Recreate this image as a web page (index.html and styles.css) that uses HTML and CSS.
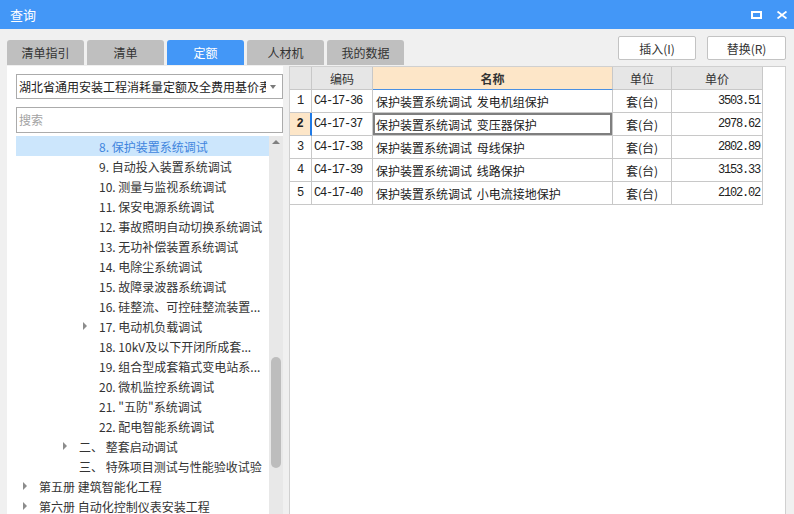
FILE: index.html
```html
<!DOCTYPE html>
<html lang="zh">
<head>
<meta charset="utf-8">
<title>查询</title>
<link rel="stylesheet" href="styles.css">
</head>
<body>
<div class="titlebar">
  <span class="title">查询</span>
  <div class="winbtns">
    <svg width="11" height="8" viewBox="0 0 11 8"><rect x="1" y="1" width="9" height="6" fill="none" stroke="#fff" stroke-width="2"/></svg>
    <svg width="10" height="8" viewBox="0 0 10 8"><path d="M0.5 0.5 L9.5 7.5 M9.5 0.5 L0.5 7.5" stroke="#fff" stroke-width="1.8" fill="none"/></svg>
  </div>
</div>
<div class="toolbar">
  <div class="tabs">
    <div class="tab">清单指引</div>
    <div class="tab">清单</div>
    <div class="tab active">定额</div>
    <div class="tab">人材机</div>
    <div class="tab">我的数据</div>
  </div>
  <div class="actions">
    <button class="btn btn-insert">插入(I)</button>
    <button class="btn">替换(R)</button>
  </div>
</div>
<div class="content">
  <div class="left">
    <div class="select"><span class="select-text">湖北省通用安装工程消耗量定额及全费用基价表</span><span class="select-arrow"></span></div>
    <div class="search">搜索</div>
    <div class="tree-wrap">
      <div class="tree">
        <div class="row i3 sel"><span class="caret"></span>8. 保护装置系统调试</div>
        <div class="row i3"><span class="caret"></span>9. 自动投入装置系统调试</div>
        <div class="row i3"><span class="caret"></span>10. 测量与监视系统调试</div>
        <div class="row i3"><span class="caret"></span>11. 保安电源系统调试</div>
        <div class="row i3"><span class="caret"></span>12. 事故照明自动切换系统调试</div>
        <div class="row i3"><span class="caret"></span>13. 无功补偿装置系统调试</div>
        <div class="row i3"><span class="caret"></span>14. 电除尘系统调试</div>
        <div class="row i3"><span class="caret"></span>15. 故障录波器系统调试</div>
        <div class="row i3"><span class="caret"></span>16. 硅整流、可控硅整流装置...</div>
        <div class="row i3"><span class="caret has"></span>17. 电动机负载调试</div>
        <div class="row i3"><span class="caret"></span>18. 10kV及以下开闭所成套...</div>
        <div class="row i3"><span class="caret"></span>19. 组合型成套箱式变电站系...</div>
        <div class="row i3"><span class="caret"></span>20. 微机监控系统调试</div>
        <div class="row i3"><span class="caret"></span>21. "五防"系统调试</div>
        <div class="row i3"><span class="caret"></span>22. 配电智能系统调试</div>
        <div class="row i2"><span class="caret has"></span>二、 整套启动调试</div>
        <div class="row i2"><span class="caret"></span>三、 特殊项目测试与性能验收试验</div>
        <div class="row i1"><span class="caret has"></span>第五册 建筑智能化工程</div>
        <div class="row i1"><span class="caret has"></span>第六册 自动化控制仪表安装工程</div>
      </div>
      <div class="scroll">
        <span class="scroll-up"></span>
        <span class="thumb"></span>
      </div>
    </div>
  </div>
  <div class="right">
    <div class="grow head">
      <div class="c n h"></div>
      <div class="c code h">编码</div>
      <div class="c name h hname">名称</div>
      <div class="c unit h">单位</div>
      <div class="c price h hprice">单价</div>
    </div>
    <div class="grow">
      <div class="c n mono">1</div>
      <div class="c code mono">C4-17-36</div>
      <div class="c name">保护装置系统调试 发电机组保护</div>
      <div class="c unit">套(台)</div>
      <div class="c price mono">3503.51</div>
    </div>
    <div class="grow">
      <div class="c n mono cur">2</div>
      <div class="c code mono">C4-17-37</div>
      <div class="c name focus">保护装置系统调试 变压器保护</div>
      <div class="c unit">套(台)</div>
      <div class="c price mono">2978.62</div>
    </div>
    <div class="grow">
      <div class="c n mono">3</div>
      <div class="c code mono">C4-17-38</div>
      <div class="c name">保护装置系统调试 母线保护</div>
      <div class="c unit">套(台)</div>
      <div class="c price mono">2802.89</div>
    </div>
    <div class="grow">
      <div class="c n mono">4</div>
      <div class="c code mono">C4-17-39</div>
      <div class="c name">保护装置系统调试 线路保护</div>
      <div class="c unit">套(台)</div>
      <div class="c price mono">3153.33</div>
    </div>
    <div class="grow">
      <div class="c n mono">5</div>
      <div class="c code mono">C4-17-40</div>
      <div class="c name">保护装置系统调试 小电流接地保护</div>
      <div class="c unit">套(台)</div>
      <div class="c price mono">2102.02</div>
    </div>
  </div>
</div>
</body>
</html>
```
FILE: styles.css
```css
* { box-sizing: border-box; }
body {
  margin: 0;
  width: 794px;
  height: 514px;
  overflow: hidden;
  background: #f0f0f0;
  font-family: "Noto Sans CJK SC", "Noto Sans", sans-serif;
  font-size: 12px;
  color: #333;
}
.titlebar {
  height: 29px;
  background: #4397f7;
  display: flex;
  align-items: center;
  padding: 0 7px 0 10px;
  color: #fff;
}
.title { font-size: 13px; }
.winbtns {
  margin-left: auto;
  display: flex;
  align-items: center;
  gap: 15px;
}
.winbtns svg { display: block; }
.toolbar {
  height: 37px;
  display: flex;
  align-items: flex-start;
  padding: 0 8px 0 7px;
}
.tabs {
  display: flex;
  gap: 3px;
  margin-top: 11px;
}
.tab {
  width: 77px;
  height: 25px;
  background: #bfbfbf;
  border-radius: 3px 3px 0 0;
  text-align: center;
  line-height: 25px;
  color: #333;
}
.tab.active { background: #4397f7; color: #fff; }
.actions {
  margin-left: auto;
  margin-top: 7px;
  display: flex;
  gap: 11px;
}
.btn {
  width: 79px;
  height: 24px;
  padding: 0;
  border: 1px solid #c3c3c3;
  border-radius: 2px;
  background: #fff;
  font: inherit;
  color: #333;
}
.btn-insert { width: 78px; }
.content {
  display: flex;
  height: 448px;
}
.left {
  margin-left: 7px;
  width: 276px;
  background: #fff;
  padding: 8px 0 0 9px;
  display: flex;
  flex-direction: column;
}
.select {
  height: 25px;
  border: 1px solid #ababab;
  display: flex;
  align-items: center;
  padding-left: 2px;
}
.select-text {
  width: 247px;
  white-space: nowrap;
  overflow: hidden;
  color: #222;
}
.select-arrow {
  margin-left: auto;
  margin-right: 6px;
  width: 0;
  height: 0;
  border-top: 4px solid #7a7a7a;
  border-left: 3px solid transparent;
  border-right: 3px solid transparent;
}
.search {
  margin-top: 8px;
  height: 26px;
  border: 1px solid #ababab;
  padding-left: 2px;
  line-height: 24px;
  color: #a3a3a3;
}
.tree-wrap {
  margin-top: 3px;
  flex: 1;
  min-height: 0;
  display: flex;
  overflow: hidden;
}
.tree { width: 253px; }
.row {
  height: 20px;
  display: flex;
  align-items: center;
  white-space: nowrap;
  overflow: hidden;
  color: #333;
}
.row.sel { background: #cce6fc; color: #3f85de; }
.i1 { padding-left: 7px; }
.i2 { padding-left: 47px; }
.i3 { padding-left: 67px; }
.caret { width: 16px; flex: none; }
.caret.has::before {
  content: "";
  display: block;
  width: 0;
  height: 0;
  border-left: 4px solid #8c8c8c;
  border-top: 4px solid transparent;
  border-bottom: 4px solid transparent;
}
.scroll {
  width: 14px;
  background: #e8e8e8;
  display: flex;
  flex-direction: column;
  align-items: center;
}
.scroll-up {
  margin-top: 4px;
  width: 0;
  height: 0;
  border-bottom: 4px solid #7f7f7f;
  border-left: 4px solid transparent;
  border-right: 4px solid transparent;
}
.thumb {
  margin-top: 213px;
  width: 10px;
  height: 111px;
  border-radius: 5px;
  background: #bdbdbd;
}
.right {
  margin-left: 6px;
  width: 497px;
  background: #fff;
  border: 1px solid #d0d0d0;
  border-bottom: none;
}
.grow { display: flex; height: 23px; }
.c {
  height: 23px;
  border-right: 1px solid #c8c8c8;
  border-bottom: 1px solid #c8c8c8;
  display: flex;
  align-items: center;
  white-space: nowrap;
  overflow: hidden;
  color: #222;
}
.n { width: 22px; justify-content: center; }
.code { width: 61px; padding-left: 2px; }
.name { width: 240px; padding-left: 3px; word-spacing: 2px; }
.unit { width: 59px; justify-content: center; }
.price { width: 91px; justify-content: flex-end; padding-right: 3px; }
.mono {
  font-family: "Liberation Mono", "DejaVu Sans Mono", monospace;
  font-size: 12px;
  letter-spacing: -1.2px;
}
.n.mono { letter-spacing: 0; }
.price.mono { padding-right: 2px; }
.h { background: #e6e6e6; justify-content: center; padding: 0; color: #333; }
.hname { background: #fde6c8; font-weight: bold; border-bottom: 1px solid #4a90e2; }
.cur {
  background: #fde6c8;
  font-weight: bold;
  border-right: 2px solid #1f7ae6;
}
.focus { box-shadow: inset 0 0 0 2px #7f7f7f; }
```
